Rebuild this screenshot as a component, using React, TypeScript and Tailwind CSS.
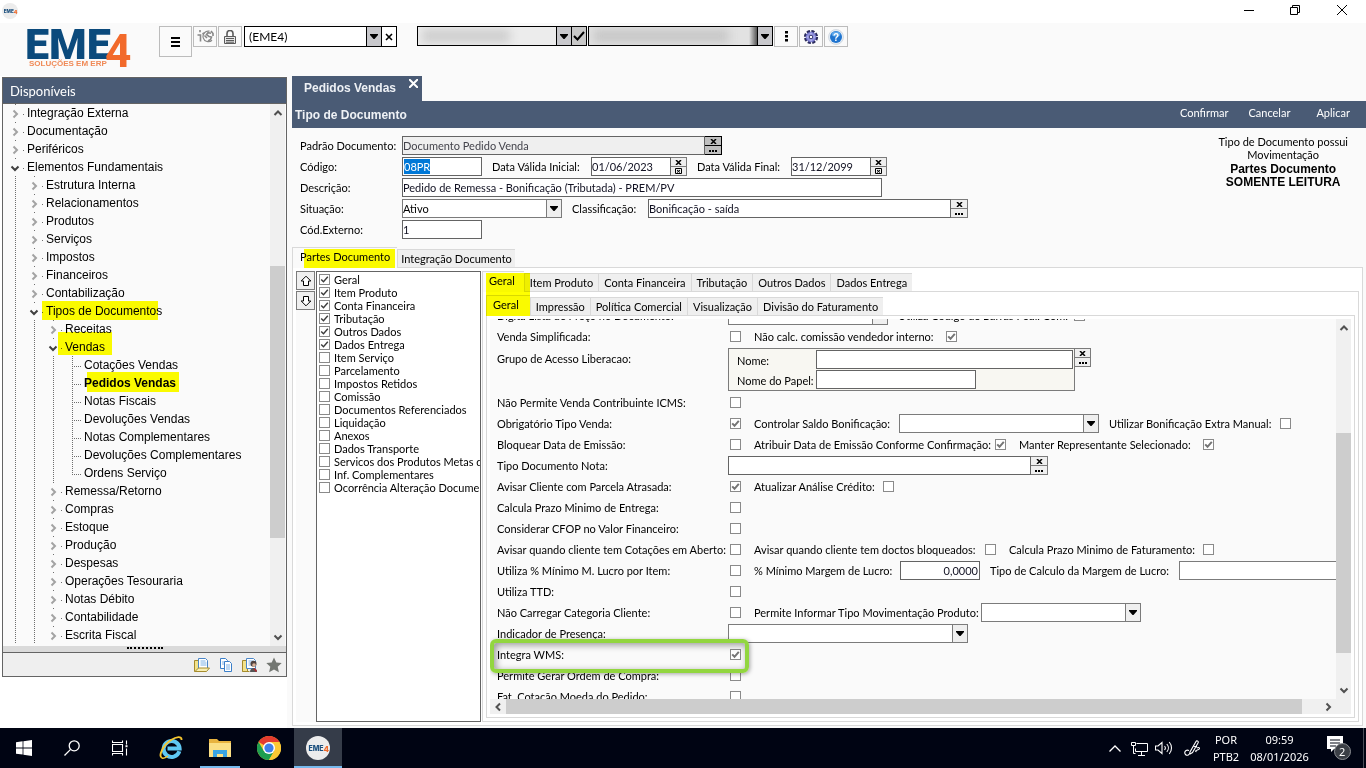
import React, { useState } from 'react';
import clsx from 'clsx';

interface TreeNode {
  label: string;
  level: number;
  open?: boolean;
  bold?: boolean;
  last?: boolean;
  mark?: string;
}

const TREE: TreeNode[] = [
  { label: 'Integração Externa', level: 0 },
  { label: 'Documentação', level: 0 },
  { label: 'Periféricos', level: 0 },
  { label: 'Elementos Fundamentais', level: 0, open: true },
  { label: 'Estrutura Interna', level: 1 },
  { label: 'Relacionamentos', level: 1 },
  { label: 'Produtos', level: 1 },
  { label: 'Serviços', level: 1 },
  { label: 'Impostos', level: 1 },
  { label: 'Financeiros', level: 1 },
  { label: 'Contabilização', level: 1 },
  { label: 'Tipos de Documentos', level: 1, open: true, mark: '-left-1 -top-px w-[116px] h-[19px]' },
  { label: 'Receitas', level: 2 },
  { label: 'Vendas', level: 2, open: true, mark: '-left-[7px] -top-[6px] w-[54px] h-[23px]' },
  { label: 'Cotações Vendas', level: 3 },
  { label: 'Pedidos Vendas', level: 3, bold: true, mark: 'left-[3px] -top-[2px] w-[92px] h-5' },
  { label: 'Notas Fiscais', level: 3 },
  { label: 'Devoluções Vendas', level: 3 },
  { label: 'Notas Complementares', level: 3 },
  { label: 'Devoluções Complementares', level: 3 },
  { label: 'Ordens Serviço', level: 3, last: true },
  { label: 'Remessa/Retorno', level: 2 },
  { label: 'Compras', level: 2 },
  { label: 'Estoque', level: 2 },
  { label: 'Produção', level: 2 },
  { label: 'Despesas', level: 2 },
  { label: 'Operações Tesouraria', level: 2 },
  { label: 'Notas Débito', level: 2 },
  { label: 'Contabilidade', level: 2 },
  { label: 'Escrita Fiscal', level: 2 },
];

const PARTES = [
  { label: 'Geral', on: true },
  { label: 'Item Produto', on: true },
  { label: 'Conta Financeira', on: true },
  { label: 'Tributação', on: true },
  { label: 'Outros Dados', on: true },
  { label: 'Dados Entrega', on: true },
  { label: 'Item Serviço', on: false },
  { label: 'Parcelamento', on: false },
  { label: 'Impostos Retidos', on: false },
  { label: 'Comissão', on: false },
  { label: 'Documentos Referenciados', on: false },
  { label: 'Liquidação', on: false },
  { label: 'Anexos', on: false },
  { label: 'Dados Transporte', on: false },
  { label: 'Servicos dos Produtos Metas da Venda', on: false },
  { label: 'Inf. Complementares', on: false },
  { label: 'Ocorrência Alteração Documento', on: false },
];

/* ---------- small controls ---------- */

function Marker({ className }: { className: string }) {
  return <span className={clsx('pointer-events-none absolute z-10 bg-[#ffff00] mix-blend-multiply', className)} />;
}

function Chevron({ dir, className }: { dir: 'up' | 'down' | 'left' | 'right'; className?: string }) {
  const d = {
    up: 'M1.5 7 L5 3.5 L8.5 7',
    down: 'M1.5 3.5 L5 7 L8.5 3.5',
    left: 'M7 1.5 L3.5 5 L7 8.5',
    right: 'M3.5 1.5 L7 5 L3.5 8.5',
  }[dir];
  return (
    <svg viewBox="0 0 10 10" className={clsx('h-[10px] w-[10px]', className)} fill="none" stroke="currentColor" strokeWidth="2">
      <path d={d} />
    </svg>
  );
}

function Check({ id, label, on = false, strong = false }: { id: string; label?: string; on?: boolean; strong?: boolean }) {
  return (
    <span className="relative block h-[11px] w-[11px] shrink-0">
      <input
        id={id}
        type="checkbox"
        defaultChecked={on}
        aria-label={label}
        className="peer block h-[11px] w-[11px] appearance-none border border-[#8a8a8a] bg-white"
      />
      <svg
        viewBox="0 0 11 11"
        fill="none"
        stroke={strong ? '#3c3c3c' : '#757575'}
        strokeWidth={strong ? '1.4' : '2'}
        className="pointer-events-none absolute inset-0 hidden h-[11px] w-[11px] peer-checked:block"
      >
        <path d="M2.2 5.4 L4.5 7.8 L8.8 2.8" />
      </svg>
    </span>
  );
}

function FieldLabel({ id, children, className }: { id: string; children: React.ReactNode; className?: string }) {
  return (
    <label htmlFor={id} className={clsx('shrink-0 whitespace-nowrap', className)}>
      {children}
    </label>
  );
}

function CheckCell({ id, label, width = '', on }: { id: string; label: string; width?: string; on?: boolean }) {
  return (
    <>
      <FieldLabel id={id} className={width}>{label}</FieldLabel>
      <span className="w-[26px] shrink-0 pl-[2px]">
        <Check id={id} on={on} />
      </span>
    </>
  );
}

function TextField({ id, value = '', className }: { id: string; value?: string; className?: string }) {
  return (
    <input
      id={id}
      type="text"
      defaultValue={value}
      className={clsx('h-[19px] min-w-0 shrink-0 border border-[#646464] bg-white text-[#111122] outline-none', className)}
    />
  );
}

function Select({ id, value = '', className }: { id: string; value?: string; className?: string }) {
  return (
    <span className={clsx('relative block h-[19px] shrink-0', className)}>
      <select id={id} className="block h-[19px] w-full appearance-none border border-[#7b7b7b] bg-white pr-4 outline-none">
        <option>{value}</option>
      </select>
      <span className="pointer-events-none absolute inset-y-px right-px flex w-[15px] items-center justify-center border-l border-[#7b7b7b] bg-[#efefef]">
        <svg viewBox="0 0 8 5" className="h-[5px] w-2">
          <path d="M0 0 H8 V1 L4.5 5 H3.5 L0 1 Z" />
        </svg>
      </span>
    </span>
  );
}

// Pair of stacked buttons: clear on top, search or calendar below
function FieldButtons({ kind = 'search', disabled = false, width = 'w-[17px]' }: {
  kind?: 'search' | 'date';
  disabled?: boolean;
  width?: string;
}) {
  return (
    <span
      className={clsx(
        'flex h-[19px] shrink-0 flex-col divide-y border border-l-0',
        width,
        disabled ? 'divide-black border-black bg-[#bfbfbf]' : 'divide-[#7b7b7b] border-[#7b7b7b] bg-[#efefef]'
      )}
    >
      <button type="button" aria-label="Limpar" className="flex flex-1 items-center justify-center">
        <svg viewBox="0 0 7 5" className="h-[5px] w-[7px]" stroke="black" strokeWidth="1.5">
          <path d="M1 0 L6 5 M6 0 L1 5" />
        </svg>
      </button>
      <button type="button" aria-label="Pesquisar" className="flex flex-1 items-center justify-center">
        {kind === 'search' ? (
          <svg viewBox="0 0 8 2" className="mt-[2px] h-[2px] w-2">
            <path d="M0 0h2v2H0zM3 0h2v2H3zM6 0h2v2H6z" />
          </svg>
        ) : (
          <svg viewBox="0 0 7 6" className="h-[6px] w-[7px]" fill="none" stroke="black">
            <path d="M.5 .5h6v5h-6z M2 2l3 2.5 M5 2l-3 2.5" />
          </svg>
        )}
      </button>
    </span>
  );
}

function Row({ children, className }: { children: React.ReactNode; className?: string }) {
  return <div className={clsx('flex h-[21px] shrink-0 items-center', className)}>{children}</div>;
}

interface TabStripProps {
  tabs: string[];
  pad: string;
  firstPad: string;
  mark: string;
}

function TabStrip({ tabs, pad, firstPad, mark }: TabStripProps) {
  const [active, setActive] = useState(tabs[0]);
  return (
    <div className="relative flex h-5 shrink-0 items-stretch" role="tablist">
      {tabs.map((tab, i) => (
        <button
          key={tab}
          type="button"
          role="tab"
          aria-selected={tab === active}
          onClick={() => setActive(tab)}
          className={clsx(
            'whitespace-nowrap border-l border-t border-[#d9d9d9] last:border-r',
            i === 0 ? firstPad : pad,
            tab === active ? 'z-[1] -mb-px bg-[#fafafa] pb-[2px]' : 'mt-[2px] bg-[#efefef]'
          )}
        >
          {tab}
        </button>
      ))}
      <Marker className={mark} />
    </div>
  );
}

/* ---------- left navigation ---------- */

function Guide({ leaf, last, chevron }: { leaf?: boolean; last?: boolean; chevron?: boolean }) {
  return (
    <svg viewBox="0 0 19 18" className="h-[18px] w-[19px] shrink-0" stroke="#6e6e6e" fill="none" shapeRendering="crispEdges">
      {chevron ? (
        <path d="M9.5 0v1 M17 10.5h1" />
      ) : (
        <path d={last ? 'M9.5 0V10' : 'M9.5 0V18'} strokeDasharray="1 1" />
      )}
      {leaf && <path d="M9 10.5H18" strokeDasharray="1 1" />}
    </svg>
  );
}

function TreeItem({ node }: { node: TreeNode }) {
  const leaf = node.level === 3;
  return (
    <li className="flex h-[18px] items-center">
      {Array.from({ length: node.level }, (_, i) => (
        <Guide key={i} />
      ))}
      {leaf ? (
        <Guide leaf last={node.last} />
      ) : (
        <span className="relative">
          <Guide chevron />
          <Chevron
            dir={node.open ? 'down' : 'right'}
            className={clsx('absolute left-1 top-[5px]', node.open ? 'text-[#3f3f3f]' : 'text-[#a3a3a3]')}
          />
        </span>
      )}
      <a href="#" className={clsx('relative ml-[2px] whitespace-nowrap leading-[18px]', node.bold && 'font-bold')}>
        {node.label}
        {node.mark && <Marker className={node.mark} />}
      </a>
    </li>
  );
}

function FolderDocs({ person }: { person?: boolean }) {
  return (
    <svg viewBox="0 0 16 16" className="h-4 w-4">
      <path d="M.5 3.5h4l1 1v10h-5z" fill="#f3e38b" stroke="#a58b2c" />
      <path d="M4.5 1.5h7l2 2v8h-9z" fill="#fff" stroke="#4a86c8" />
      <path d="M6.5 4h5M6.5 6h6M6.5 8h6" stroke="#7eb2e6" />
      {person ? (
        <>
          <circle cx="11.5" cy="6.8" r="3" fill="#50423f" />
          <circle cx="12" cy="8" r="1.8" fill="#d9b39b" />
          <path d="M8 15c0-3 2-4 3.5-4s3.5 1 3.5 4z" fill="#555" />
          <path d="M12 11.5l2.5 3" stroke="#b3272d" strokeWidth="1.5" />
          <path d="M.5 14.5h7" stroke="#a58b2c" />
        </>
      ) : (
        <path d="M1 14.5L4.500 11h11l-3 3.500z" fill="#f8efb4" stroke="#a58b2c" />
      )}
    </svg>
  );
}

function Sidebar() {
  return (
    <nav className="ml-[2px] mt-px flex h-[600px] w-[285px] shrink-0 flex-col border border-[#646464] bg-[#fafafa]">
      <h2 className="flex h-[26px] shrink-0 items-center border-b border-[#646464] bg-[#4a5b75] pl-[7px] pt-px text-[13px] text-white">
        Disponíveis
      </h2>
      <div className="flex min-h-0 flex-1">
        <ul className="min-w-0 flex-1 overflow-hidden pl-[3px] font-['Liberation_Sans'] text-xs">
          {TREE.map((node) => (
            <TreeItem key={node.label} node={node} />
          ))}
        </ul>
        <div className="mr-px flex w-[15px] flex-col items-center bg-[#f0f0f0] text-[#505050]">
          <Chevron dir="up" className="my-[4px] shrink-0" />
          <div className="flex-[144]" />
          <div className="w-full flex-[272] bg-[#cdcdcd]" />
          <div className="flex-[90]" />
          <Chevron dir="down" className="my-[4px] shrink-0" />
        </div>
      </div>
      <div className="flex h-[7px] shrink-0 items-start justify-center border-b border-[#646464] bg-[#dadada] pt-px">
        <div className="w-9 border-t-2 border-dotted border-black" />
      </div>
      <div className="flex h-[23px] shrink-0 items-center justify-end gap-2 bg-[#efefef] pr-1">
        <button type="button" aria-label="Abrir pasta">
          <FolderDocs />
        </button>
        <button type="button" aria-label="Copiar">
          <svg viewBox="0 0 16 16" className="h-4 w-4" fill="#fff" stroke="#3b7fc9">
            <path d="M2.5 1.5h5l2 2v8h-7z" />
            <path d="M6.5 4.5h5l2 2v8h-7z" />
            <path d="M8 8h4M8 10h4M8 12h4M4 5h2M4 7h2" stroke="#7eb2e6" />
          </svg>
        </button>
        <button type="button" aria-label="Pasta do usuário">
          <FolderDocs person />
        </button>
        <button type="button" aria-label="Favoritos">
          <svg viewBox="0 0 16 16" className="h-4 w-4" fill="#737772">
            <path d="M8 .5l2.3 4.9 5.4.6-4 3.7 1.2 5.5L8 12.4l-4.9 2.8 1.2-5.5-4-3.7 5.4-.6z" />
          </svg>
        </button>
      </div>
    </nav>
  );
}

/* ---------- title bar and toolbar ---------- */

function RoundLogo({ className, size }: { className?: string; size: string }) {
  return (
    <svg viewBox="0 0 24 24" className={clsx(size, className)}>
      <circle cx="12" cy="12" r="12" fill="#ececec" />
      <text x="2.5" y="14.5" fontFamily="Inter" fontWeight="800" fontSize="7" fill="#1b4f7d">
        EME
      </text>
      <text x="17.5" y="16" fontFamily="Inter" fontWeight="800" fontSize="8" fill="#ee6a2c">
        4
      </text>
    </svg>
  );
}

function TitleBar() {
  return (
    <header className="flex h-[23px] shrink-0 items-start justify-between bg-white">
      <RoundLogo size="h-4 w-4" className="ml-[2px] mt-[3px]" />
      <div className="flex items-center">
        <button type="button" aria-label="Minimizar" className="flex h-5 w-[46px] items-center justify-center">
          <svg viewBox="0 0 10 10" className="h-[10px] w-[10px]" stroke="black">
            <path d="M0 5.5h10" />
          </svg>
        </button>
        <button type="button" aria-label="Restaurar" className="flex h-5 w-[46px] items-center justify-center">
          <svg viewBox="0 0 10 10" className="h-[10px] w-[10px]" fill="none" stroke="black">
            <path d="M.5 2.5h7v7h-7z M2.5 2.5v-2h7v7h-2" />
          </svg>
        </button>
        <button type="button" aria-label="Fechar" className="flex h-5 w-12 items-center justify-center">
          <svg viewBox="0 0 10 10" className="h-[10px] w-[10px]" stroke="black">
            <path d="M0 0l10 10M10 0L0 10" />
          </svg>
        </button>
      </div>
    </header>
  );
}

function ToolButton({ label, children }: { label: string; children: React.ReactNode }) {
  return (
    <button
      type="button"
      aria-label={label}
      className="flex h-[21px] w-6 shrink-0 items-center justify-center border border-[#bcbcbc] bg-[#fafafa]"
    >
      {children}
    </button>
  );
}

function DownArrow() {
  return (
    <span className="flex w-[15px] shrink-0 items-center justify-center border-l border-black bg-[#c8c8cc]">
      <svg viewBox="0 0 8 5" className="h-[5px] w-2">
        <path d="M0 0 H8 V1 L4.5 5 H3.5 L0 1 Z" />
      </svg>
    </span>
  );
}

function Toolbar() {
  return (
    <div className="flex h-[53px] shrink-0 items-start bg-[#fafafa] pl-5 pt-[3px]">
      <svg viewBox="0 0 126 50" className="h-[50px] w-[126px] shrink-0">
        <text x="5" y="33" fontFamily="Roboto" fontWeight="900" fontSize="43" fill="#0b4a7c">
          EME
        </text>
        <text x="85" y="41" fontFamily="Roboto" fontWeight="700" fontSize="46" fill="#f26a2b">
          4
        </text>
        <text x="9" y="40" fontFamily="Liberation Sans" fontWeight="700" fontSize="8" fill="#f08a57">
          SOLUÇÕES EM ERP
        </text>
      </svg>
      <button
        type="button"
        aria-label="Menu"
        className="ml-[13px] mr-px flex h-[31px] w-[33px] shrink-0 items-center justify-center border border-[#bcbcbc]"
      >
        <svg viewBox="0 0 10 10" className="h-[10px] w-[10px]" stroke="black" strokeWidth="2">
          <path d="M0 1h9M0 5h9M0 9h9" />
        </svg>
      </button>
      <div className="flex items-start gap-px">
        <ToolButton label="Idioma">
          <svg viewBox="0 0 17 13" className="h-[13px] w-[17px]" fill="none" stroke="#888" strokeWidth="1.6">
            <path d="M3 0v2.200M.500 5H3.500v6.500M5.500 4L7 3" />
            <path d="M12.500 1.200a5.300 5.300 0 1 0 2.500 9" strokeWidth="1.200" />
            <path d="M14 3.200l-3-.5-1.500 2L12 6.500l2.500.5L13.500 9.500l-2.500 1.500M7.500 5.500L10 8M14 1l2 2.500v2.500" />
          </svg>
        </ToolButton>
        <ToolButton label="Bloquear">
          <svg viewBox="0 0 12 14" className="h-[14px] w-3" fill="none" stroke="#5a5a5a">
            <path d="M3 6V3.5a3 3 0 0 1 6 0V6" strokeWidth="1.6" />
            <path d="M.5 6.5h11v7H.5z" fill="#e6e6e6" />
            <path d="M2 8.5h8M2 10.5h8M2 12.2h8" />
          </svg>
        </ToolButton>
        <div className="ml-px flex h-[21px] w-[153px] items-stretch border border-black bg-white">
          <input aria-label="Empresa" defaultValue="(EME4)" className="min-w-0 flex-1 pl-1 text-xs outline-none" />
          <DownArrow />
          <button type="button" aria-label="Limpar empresa" className="flex w-[15px] items-center justify-center border-l border-black">
            <svg viewBox="0 0 8 8" className="h-2 w-2" stroke="black" strokeWidth="1.6">
              <path d="M1 1l6 6M7 1L1 7" />
            </svg>
          </button>
        </div>
      </div>
      <div className="ml-5 flex items-start gap-px">
        <div className="flex h-5 w-[170px] items-stretch border border-black bg-[#ececec]">
          <div className="flex min-w-0 flex-1 items-center overflow-hidden">
            <div className="ml-1 h-[14px] w-[88px] bg-[#cfcfcf] blur-[5px]" />
          </div>
          <DownArrow />
          <button type="button" aria-label="Confirmar filtro" className="flex w-[15px] items-center justify-center border-l border-black bg-[#c8c8c8]">
            <svg viewBox="0 0 12 10" className="h-[10px] w-3" fill="none" stroke="black" strokeWidth="2">
              <path d="M1 5l3.5 3.5L11 1" />
            </svg>
          </button>
        </div>
        <div className="flex h-5 w-[185px] items-stretch border border-black bg-[#e2e2e2]">
          <div className="flex min-w-0 flex-1 items-center justify-between overflow-hidden">
            <div className="ml-1 h-[14px] w-[136px] bg-[#c8c8c8] blur-[5px]" />
            <div className="h-full w-2 bg-linear-to-r from-transparent to-[#555555]" />
          </div>
          <DownArrow />
        </div>
        <ToolButton label="Mais opções">
          <svg viewBox="0 0 3 11" className="h-[11px] w-[3px]">
            <path d="M0 0h3v2.5H0zM0 4h3v2.5H0zM0 8h3v2.5H0z" />
          </svg>
        </ToolButton>
        <ToolButton label="Configurações">
          <svg viewBox="0 0 16 16" className="h-4 w-4">
            <circle cx="8" cy="8" r="5.8" fill="none" stroke="#2a2a5c" strokeWidth="2.6" strokeDasharray="3.1 1.4" />
            <circle cx="8" cy="8" r="4.8" fill="#8f90dd" stroke="#6a6bc4" />
            <path d="M8 3.500v9M3.500 8h9" stroke="#c4c5f6" />
            <circle cx="8" cy="8" r="1.8" fill="#fff" stroke="#30306c" />
          </svg>
        </ToolButton>
        <ToolButton label="Ajuda">
          <svg viewBox="0 0 16 16" className="h-4 w-4">
            <circle cx="8" cy="8" r="7.5" fill="#e4ecf5" stroke="#c0cad4" strokeWidth=".6" />
            <circle cx="8" cy="8" r="6" fill="#1f74cf" />
            <ellipse cx="8" cy="5" rx="4.4" ry="2.6" fill="#5ba6ea" />
            <text x="5" y="11.8" fontFamily="Liberation Sans" fontWeight="700" fontSize="10" fill="#fff">
              ?
            </text>
          </svg>
        </ToolButton>
      </div>
    </div>
  );
}

/* ---------- document form ---------- */

function DocumentHeader() {
  return (
    <div className="flex shrink-0 justify-between py-[7px] pl-2 pr-[18px]">
      <div>
        <Row>
          <FieldLabel id="padrao" className="w-[102px]">Padrão Documento:</FieldLabel>
          <input
            id="padrao"
            readOnly
            value="Documento Pedido Venda"
            className="h-[19px] w-[303px] border border-[#646464] bg-[#efefef] text-[#44444c] outline-none"
          />
          <FieldButtons disabled />
        </Row>
        <Row>
          <FieldLabel id="codigo" className="w-[102px]">Código:</FieldLabel>
          <div className="relative flex">
            <TextField id="codigo" className="w-20" />
            <span className="pointer-events-none absolute left-[2px] top-[2px] bg-[#0078d7] leading-[15px] text-white">08PR</span>
          </div>
          <FieldLabel id="data-inicial" className="ml-[10px] w-[99px]">Data Válida Inicial:</FieldLabel>
          <TextField id="data-inicial" value="01/06/2023" className="w-20" />
          <FieldButtons kind="date" width="w-4" />
          <FieldLabel id="data-final" className="ml-[10px] w-[94px]">Data Válida Final:</FieldLabel>
          <TextField id="data-final" value="31/12/2099" className="w-20" />
          <FieldButtons kind="date" width="w-4" />
        </Row>
        <Row>
          <FieldLabel id="descricao" className="w-[102px]">Descrição:</FieldLabel>
          <TextField id="descricao" value="Pedido de Remessa - Bonificação (Tributada) - PREM/PV" className="w-[480px]" />
        </Row>
        <Row>
          <FieldLabel id="situacao" className="w-[102px]">Situação:</FieldLabel>
          <Select id="situacao" value="Ativo" className="w-40" />
          <FieldLabel id="classificacao" className="ml-[10px] w-[76px]">Classificação:</FieldLabel>
          <TextField id="classificacao" value="Bonificação - saída" className="w-[303px]" />
          <FieldButtons />
        </Row>
        <Row>
          <FieldLabel id="externo" className="w-[102px]">Cód.Externo:</FieldLabel>
          <TextField id="externo" value="1" className="w-20" />
        </Row>
      </div>
      <div className="text-center leading-[13px]">
        <p>
          Tipo de Documento possui
          <br />
          Movimentação
        </p>
        <p className="mt-[2px] font-['Liberation_Sans'] text-xs font-bold leading-[13px]">
          Partes Documento
          <br />
          SOMENTE LEITURA
        </p>
      </div>
    </div>
  );
}

function GeralForm() {
  return (
    <div className="-mt-[14px] flex flex-col pl-[7px]">
      <Row>
        <FieldLabel id="lista-preco" className="w-[231px]">Digita Lista de Preço no Documento:</FieldLabel>
        <Select id="lista-preco" className="mr-[10px] w-40" />
        <CheckCell id="cod-barras" label="Utiliza Código de Barras Pedi. Com:" width="w-[174px]" />
      </Row>
      <Row>
        <CheckCell id="simplificada" label="Venda Simplificada:" width="w-[231px]" />
        <CheckCell id="comissao" label="Não calc. comissão vendedor interno:" width="w-[190px]" on />
      </Row>
      <div className="flex h-[45px] shrink-0 items-start pt-px">
        <span className="w-[231px] shrink-0 pt-1">Grupo de Acesso Liberacao:</span>
        <div className="h-[43px] w-[347px] shrink-0 border border-[#7b7b7b] bg-[#f8f7f2] pl-2 pt-px">
          <div className="flex h-5 items-start">
            <FieldLabel id="grupo-nome" className="w-[79px] pt-1">Nome:</FieldLabel>
            <TextField id="grupo-nome" className="w-[257px]" />
          </div>
          <div className="flex h-5 items-start">
            <FieldLabel id="grupo-papel" className="w-[79px] pt-1">Nome do Papel:</FieldLabel>
            <TextField id="grupo-papel" className="w-40" />
          </div>
        </div>
        <FieldButtons width="w-4" />
      </div>
      <Row>
        <CheckCell id="icms" label="Não Permite Venda Contribuinte ICMS:" width="w-[231px]" />
      </Row>
      <Row>
        <CheckCell id="obrigatorio" label="Obrigatório Tipo Venda:" width="w-[231px]" on />
        <FieldLabel id="saldo" className="w-[145px]">Controlar Saldo Bonificação:</FieldLabel>
        <Select id="saldo" className="mr-[10px] w-[200px]" />
        <CheckCell id="extra" label="Utilizar Bonificação Extra Manual:" width="w-[169px]" />
      </Row>
      <Row>
        <CheckCell id="bloquear" label="Bloquear Data de Emissão:" width="w-[231px]" />
        <CheckCell id="atribuir" label="Atribuir Data de Emissão Conforme Confirmação:" width="w-[239px]" on />
        <CheckCell id="manter" label="Manter Representante Selecionado:" width="w-[182px]" on />
      </Row>
      <Row>
        <FieldLabel id="tipo-nota" className="w-[231px]">Tipo Documento Nota:</FieldLabel>
        <TextField id="tipo-nota" className="w-[303px]" />
        <FieldButtons />
      </Row>
      <Row>
        <CheckCell id="parcela" label="Avisar Cliente com Parcela Atrasada:" width="w-[231px]" on />
        <CheckCell id="credito" label="Atualizar Análise Crédito:" width="w-[127px]" />
      </Row>
      <Row>
        <CheckCell id="prazo-entrega" label="Calcula Prazo Minimo de Entrega:" width="w-[231px]" />
      </Row>
      <Row>
        <CheckCell id="cfop" label="Considerar CFOP no Valor Financeiro:" width="w-[231px]" />
      </Row>
      <Row>
        <CheckCell id="cotacoes" label="Avisar quando cliente tem Cotações em Aberto:" width="w-[231px]" />
        <CheckCell id="doctos" label="Avisar quando cliente tem doctos bloqueados:" width="w-[229px]" />
        <CheckCell id="prazo-fat" label="Calcula Prazo Minimo de Faturamento:" width="w-[192px]" />
      </Row>
      <Row>
        <CheckCell id="lucro-item" label="Utiliza % Mínimo M. Lucro por Item:" width="w-[231px]" />
        <FieldLabel id="margem" className="w-[146px]">% Mínimo Margem de Lucro:</FieldLabel>
        <TextField id="margem" value="0,0000" className="w-20 pr-px text-right" />
        <FieldLabel id="calculo" className="ml-[10px] w-[189px]">Tipo de Calculo da Margem de Lucro:</FieldLabel>
        <Select id="calculo" className="w-80" />
      </Row>
      <Row>
        <CheckCell id="ttd" label="Utiliza TTD:" width="w-[231px]" />
      </Row>
      <Row>
        <CheckCell id="categoria" label="Não Carregar Categoria Cliente:" width="w-[231px]" />
        <FieldLabel id="movimentacao" className="w-[227px]">Permite Informar Tipo Movimentação Produto:</FieldLabel>
        <Select id="movimentacao" className="w-40" />
      </Row>
      <Row>
        <FieldLabel id="presenca" className="w-[231px]">Indicador de Presença:</FieldLabel>
        <Select id="presenca" className="w-60" />
      </Row>
      <Row className="relative">
        <CheckCell id="wms" label="Integra WMS:" width="w-[231px]" on />
        <span className="pointer-events-none absolute -left-[7px] -top-[5px] z-10 h-[34px] w-[259px] rounded-md border-4 border-[#92d63f] shadow-[1px_1px_4px_rgba(0,0,0,0.35),inset_2px_2px_7px_rgba(0,0,0,0.4)]" />
      </Row>
      <Row>
        <CheckCell id="ordem-compra" label="Permite Gerar Ordem de Compra:" width="w-[231px]" />
      </Row>
      <Row>
        <CheckCell id="moeda" label="Fat. Cotação Moeda do Pedido:" width="w-[231px]" />
      </Row>
    </div>
  );
}

function PartesList() {
  return (
    <ul className="mr-px w-[165px] shrink-0 overflow-hidden border border-[#646464] bg-white pl-[2px] pt-px">
      {PARTES.map((parte, i) => (
        <li key={parte.label} className="flex h-[13px] items-center gap-1">
          <Check id={`parte-${i}`} on={parte.on} strong />
          <label htmlFor={`parte-${i}`} className="whitespace-nowrap leading-[13px]">
            {parte.label}
          </label>
        </li>
      ))}
    </ul>
  );
}

function OrderButton({ up }: { up?: boolean }) {
  return (
    <button
      type="button"
      aria-label={up ? 'Mover para cima' : 'Mover para baixo'}
      className="flex h-[19px] w-[19px] items-center justify-center border border-[#7b7b7b] bg-[#efefef]"
    >
      <svg viewBox="0 0 12 12" className="h-3 w-3" fill="#fff" stroke="black">
        <path d={up ? 'M6 1.2L10.8 6H8.5v4.5h-5V6H1.2z' : 'M6 10.8L10.8 6H8.5V1.5h-5V6H1.2z'} />
      </svg>
    </button>
  );
}

function DocumentPanel() {
  return (
    <main className="ml-[5px] flex min-w-0 flex-1 flex-col bg-[#fafafa]">
      <div className="flex h-[25px] w-[130px] shrink-0 items-start justify-between bg-[#4a5b75] pl-3 pr-1 text-white">
        <span className="pt-[5px] font-['Liberation_Sans'] text-xs leading-[14px] font-bold text-[#eef1f5]">Pedidos Vendas</span>
        <button type="button" aria-label="Fechar aba" className="pt-[3px]">
          <svg viewBox="0 0 9 9" className="h-[9px] w-[9px]" stroke="white" strokeWidth="2">
            <path d="M0 0l9 9M9 0L0 9" />
          </svg>
        </button>
      </div>
      <div className="flex h-[27px] shrink-0 items-center justify-between bg-[#4a5b75] pl-[3px] pr-4 text-white">
        <h1 className="font-['Liberation_Sans'] text-xs font-bold text-[#eef1f5]">Tipo de Documento</h1>
        <div className="flex gap-5 pb-[3px]">
          <button type="button">Confirmar</button>
          <button type="button">Cancelar</button>
          <button type="button" className="ml-[6px]">Aplicar</button>
        </div>
      </div>

      <DocumentHeader />

      <div className="mb-[2px] mr-[3px] flex min-h-0 flex-1 flex-col">
        <TabStrip
          tabs={['Partes Documento', 'Integração Documento']}
          pad="px-[3px]"
          firstPad="px-[7px]"
          mark="left-3 top-[2px] h-[19px] w-[91px]"
        />
        <div className="flex min-h-0 flex-1 border border-[#d9d9d9] bg-white p-[3px]">
          <div className="flex w-5 shrink-0 flex-col gap-px bg-[#fafafa]">
            <OrderButton up />
            <OrderButton />
          </div>
          <PartesList />
          <div className="flex min-w-0 flex-1 flex-col">
            <TabStrip
              tabs={['Geral', 'Item Produto', 'Conta Financeira', 'Tributação', 'Outros Dados', 'Dados Entrega']}
              pad="px-[5px]"
              firstPad="pl-[6px] pr-[9px]"
              mark="left-1 top-[2px] h-[22px] w-[44px]"
            />
            <div className="flex min-h-0 flex-1 flex-col border border-[#d9d9d9] bg-white p-[3px]">
              <TabStrip
                tabs={['Geral', 'Impressão', 'Política Comercial', 'Visualização', 'Divisão do Faturamento']}
                pad="px-[5px]"
                firstPad="pl-[6px] pr-[11px]"
                mark="left-0 top-0 h-[21px] w-[44px]"
              />
              <div className="flex min-h-0 flex-1 flex-col border border-[#d9d9d9] bg-white p-[3px]">
                <div className="flex min-h-0 flex-1">
                  <div className="min-w-0 flex-1 overflow-hidden bg-[#fafafa]">
                    <GeralForm />
                  </div>
                  <div className="flex w-[15px] shrink-0 flex-col items-center bg-[#f0f0f0] text-[#505050]">
                    <Chevron dir="up" className="my-1 shrink-0" />
                    <div className="flex-[96]" />
                    <div className="w-full flex-[219] bg-[#cdcdcd]" />
                    <div className="flex-[28]" />
                    <Chevron dir="down" className="my-1 shrink-0" />
                  </div>
                </div>
                <div className="flex h-[15px] shrink-0 items-center bg-[#f0f0f0] pr-[15px] text-[#505050]">
                  <Chevron dir="left" className="mx-[3px] shrink-0" />
                  <div className="h-full flex-[796] bg-[#cdcdcd]" />
                  <div className="flex-[18]" />
                  <Chevron dir="right" className="mx-[3px] shrink-0" />
                </div>
              </div>
            </div>
          </div>
        </div>
      </div>
    </main>
  );
}

/* ---------- taskbar ---------- */

function TaskButton({ label, width = 'w-12', running, active, children }: {
  label: string;
  width?: string;
  running?: boolean;
  active?: boolean;
  children: React.ReactNode;
}) {
  return (
    <button
      type="button"
      aria-label={label}
      className={clsx('relative flex h-full shrink-0 items-center justify-center', width, active && 'bg-[#353c49]')}
    >
      {children}
      {running && <span className={clsx('absolute bottom-0 h-[2px] bg-[#76b9ed]', active ? 'w-full' : 'w-10')} />}
    </button>
  );
}

function Taskbar() {
  return (
    <footer className="flex h-10 shrink-0 items-stretch justify-between bg-[#000413] font-['Noto_Sans'] text-[11px] text-white">
      <div className="flex items-stretch">
        <TaskButton label="Iniciar">
          <svg viewBox="0 0 16 16" className="h-4 w-4" fill="#fff">
            <path d="M0 2.2L6.6 1.3v6.2H0zM7.4 1.2L16 0v7.5H7.4zM0 8.4h6.6v6.2L0 13.7zM7.4 8.4H16V16l-8.6-1.2z" />
          </svg>
        </TaskButton>
        <TaskButton label="Pesquisar">
          <svg viewBox="0 0 16 16" className="h-4 w-4" fill="none" stroke="#fff" strokeWidth="1.3">
            <circle cx="10.2" cy="5.8" r="5" />
            <path d="M6.6 9.4L.5 15.5" />
          </svg>
        </TaskButton>
        <TaskButton label="Visão de tarefas">
          <svg viewBox="0 0 16 16" className="h-4 w-4" fill="none" stroke="#fff" strokeWidth="1.1">
            <path d="M.5 4.5h10v7H.5z M.5 .5v2h10v-2 M.5 15.5v-2h10v2 M14.5 .5v4 M14.5 8.5v7" />
            <path d="M13.5 5.2h2v2h-2z" fill="#fff" stroke="none" />
          </svg>
        </TaskButton>
        <div className="ml-[3px] flex gap-px">
          <TaskButton label="Internet Explorer">
            <svg viewBox="0 0 24 24" className="h-6 w-6" fill="none">
              <path d="M20.3 15.2A8 8 0 1 1 20.6 12.4H8.5" stroke="#5fc8f4" strokeWidth="4" />
              <path d="M3 22C-1 20 4 9 12 4c5-3.2 11-4.5 10.5 0" stroke="#f6c62f" strokeWidth="1.9" />
              <path d="M3 22c2 .8 4-.5 6-2" stroke="#f6c62f" strokeWidth="1.5" />
            </svg>
          </TaskButton>
          <TaskButton label="Explorador de Arquivos" running>
            <svg viewBox="0 0 22 19" className="h-[19px] w-[22px]">
              <path d="M0 0h8l2 2h12v5H0z" fill="#e8b33f" />
              <path d="M0 4h22v14H0z" fill="#fbdf85" />
              <path d="M4 18v-7h14v7h-4v-3H8v3z" fill="#38a3e4" />
            </svg>
          </TaskButton>
          <TaskButton label="Google Chrome">
            <svg viewBox="0 0 24 24" className="h-6 w-6">
              <circle cx="12" cy="12" r="12" fill="#fcc934" />
              <path d="M12 12L1.6 6A12 12 0 0 1 22.4 6H12z" fill="#e33b2e" />
              <path d="M1.6 6A12 12 0 0 0 12 24l5.2-9H12L6.8 15z" fill="#1e9e50" />
              <path d="M12 6h10.4A12 12 0 0 1 12 24l5.2-9z" fill="#fcc934" />
              <circle cx="12" cy="12" r="6" fill="#fff" />
              <circle cx="12" cy="12" r="4.6" fill="#3f7fe8" />
            </svg>
          </TaskButton>
          <TaskButton label="EME4" running active>
            <RoundLogo size="h-6 w-6" />
          </TaskButton>
        </div>
      </div>
      <div className="flex items-center">
        <button type="button" aria-label="Mostrar ícones ocultos">
          <svg viewBox="0 0 12 7" className="h-[7px] w-3" fill="none" stroke="#fff" strokeWidth="1.3">
            <path d="M.5 6.5L6 1l5.5 5.5" />
          </svg>
        </button>
        <svg viewBox="0 0 17 15" className="ml-[10px] h-[15px] w-[17px]" fill="none" stroke="#fff">
          <path d="M5.5 2.5h11v8h-12v-3 M7 14.5h7 M10.5 10.5v4 M.5 1.5h4v3h-4z M2.5 4.5v8h2" />
        </svg>
        <svg viewBox="0 0 18 14" className="ml-[7px] h-[14px] w-[18px]" fill="none" stroke="#fff" strokeWidth="1.1">
          <path d="M.5 5h2.5L7 1.5v11L3 9H.5z M9.5 5a3 3 0 0 1 0 4 M11.8 3a6 6 0 0 1 0 8 M14.2 1a9 9 0 0 1 0 12" />
        </svg>
        <svg viewBox="0 0 16 16" className="ml-[11px] h-4 w-4" fill="none" stroke="#fff" strokeWidth="1.1">
          <path d="M5 10.5C1 9 0 13 1.5 14.5S6 15 6 12L12 1.5c1-1.500 3 0 2 1.500L8.500 12.500 6 14 M9 6l4 1M13 8c2.500-1.500 3.500 1 1 1.800s-3 1.500-1.500 2" />
        </svg>
        <div className="ml-[10px] w-8 text-center leading-[17px]">
          POR
          <br />
          PTB2
        </div>
        <div className="ml-[6px] w-[63px] text-center leading-[17px]">
          09:59
          <br />
          08/01/2026
        </div>
        <button type="button" aria-label="Notificações" className="relative ml-4 mr-3 block h-6 w-6">
          <svg viewBox="0 0 24 24" className="h-6 w-6">
            <path d="M0 0h16v13H7l-3 3v-3H0z" fill="#fff" />
            <path d="M3 4h10M3 7h10M3 10h6" stroke="#000413" />
            <circle cx="15.5" cy="15.5" r="8" fill="#3b3f46" stroke="#8b8e93" />
          </svg>
          <span className="absolute left-3 top-2 leading-[15px]">2</span>
        </button>
        <span className="h-full w-[3px] border-l border-[#4a4e58]" />
      </div>
    </footer>
  );
}

export default function App() {
  return (
    <div className="flex h-screen flex-col overflow-hidden bg-[#fafafa] font-['Lato','Liberation_Sans',sans-serif] text-[11px] leading-[14px] text-black">
      <TitleBar />
      <Toolbar />
      <div className="flex min-h-0 flex-1 items-stretch">
        <div className="bg-white">
          <Sidebar />
        </div>
        <DocumentPanel />
      </div>
      <Taskbar />
    </div>
  );
}
